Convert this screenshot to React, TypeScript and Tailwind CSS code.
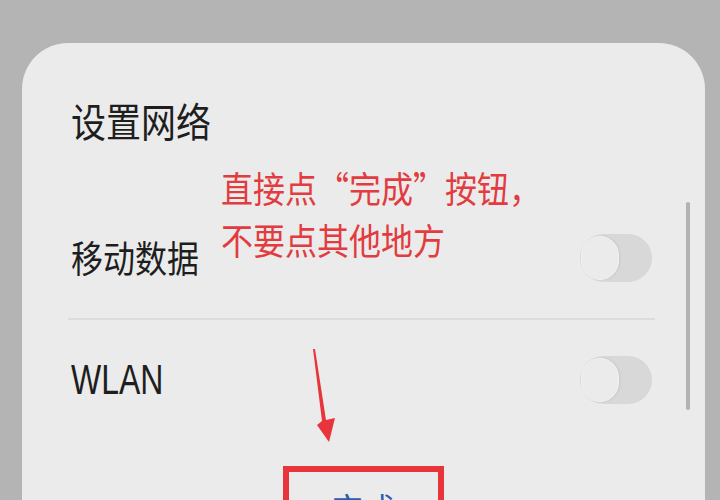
import React from "react";

const cjk = "font-['Noto_Sans_CJK_SC','Noto_Sans',sans-serif]";

function Toggle() {
  return (
    <div className="relative h-[48px] w-[72px] rounded-full bg-[#d8d8d8]">
      <div className="absolute left-[1px] top-[2px] h-[44px] w-[38px] rounded-full border border-[#f2f2f2] bg-[#ebebeb] shadow-[1px_0_2px_rgba(0,0,0,0.08)]" />
    </div>
  );
}

function Row({ label, latin, height }: { label: string; latin?: boolean; height: string }) {
  return (
    <div className={`flex items-center justify-between pl-[49px] pr-[53px] ${height}`}>
      <span
        className={
          latin
            ? "inline-block origin-center scale-y-[1.3] font-['Liberation_Sans',sans-serif] text-[32px] leading-[40px] text-[#1e1e1e]"
            : `inline-block origin-center scale-y-[1.16] ${cjk} text-[32px] leading-[45px] text-[#1e1e1e]`
        }
      >
        {label}
      </span>
      <Toggle />
    </div>
  );
}

export default function App() {
  return (
    <div className="relative h-[500px] w-[720px] overflow-hidden bg-[#b4b4b4] pl-[22px] pr-[15px] pt-[43px]">
      <div className="relative flex h-[600px] flex-col rounded-t-[46px] bg-[#ebebeb]">
        {/* title */}
        <div className="flex h-[154px] items-center pl-[49px]">
          <span className={`inline-block origin-center scale-y-[1.15] ${cjk} text-[35px] leading-[48px] text-[#1e1e1e]`}>
            设置网络
          </span>
        </div>

        <Row label="移动数据" height="h-[121px]" />
        <div className="ml-[46px] mr-[50px] h-[2px] bg-[#dcdcdc]" />
        <Row label="WLAN" latin height="h-[120px]" />

        {/* done button, boxed */}
        <div className="mt-[26px] flex justify-center">
          <div className="w-[161px] border-[6px] border-[#e8353b] pt-[12px] text-center">
            <span className={`inline-block origin-top scale-y-[1.15] ${cjk} text-[32px] leading-[45px] text-[#2d5cb0]`}>
              完成
            </span>
          </div>
        </div>

        {/* scrollbar */}
        <div className="absolute right-[15px] top-[159px] h-[208px] w-[4px] rounded-full bg-[#b3b3b3]" />

        {/* annotation */}
        <div
          className={`absolute left-[199px] top-[119px] origin-top-left scale-y-[1.15] whitespace-nowrap ${cjk} text-[32px] leading-[45px] text-[#e23b40]`}
        >
          <div>直接点“完成”按钮，</div>
          <div>不要点其他地方</div>
        </div>
      </div>

      {/* arrow */}
      <svg className="pointer-events-none absolute left-0 top-0" width="720" height="500" viewBox="0 0 720 500">
        <polygon
          points="313,349 315,349 326,420 335,418 329,442 317,425 322,421"
          fill="#e8353b"
        />
      </svg>
    </div>
  );
}
